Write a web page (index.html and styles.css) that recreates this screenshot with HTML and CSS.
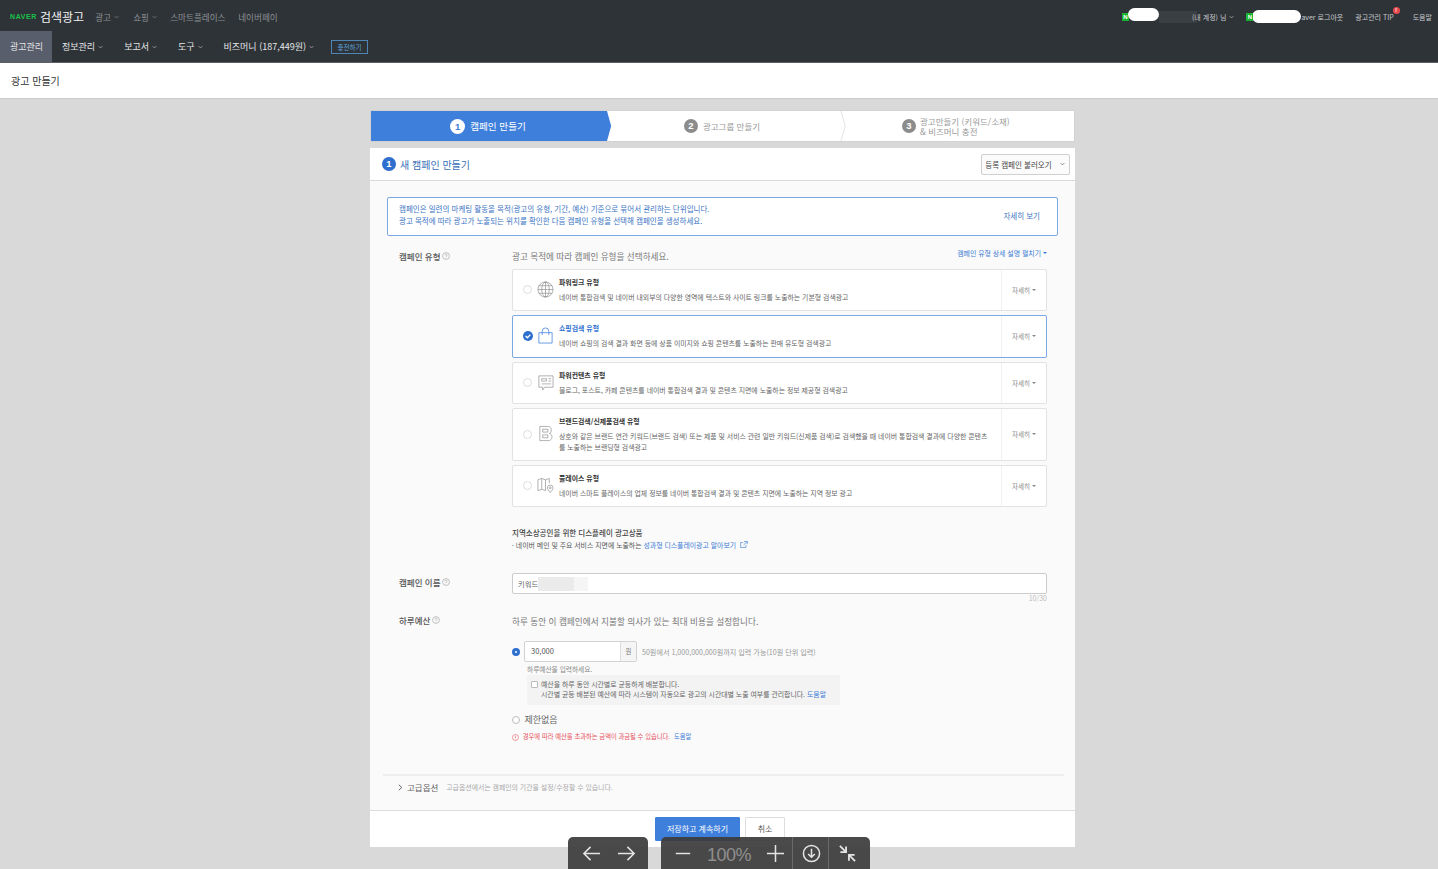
FILE: index.html
```html
<!DOCTYPE html>
<html lang="ko">
<head>
<meta charset="utf-8">
<title>광고 만들기</title>
<link rel="stylesheet" href="styles.css">
</head>
<body>
<header class="header">
  <div class="topbar">
    <div class="brand"><span class="naver">NAVER</span><span class="brand-name">검색광고</span></div>
    <nav class="topnav">
      <a class="tn w1">광고 <svg class="chev" viewBox="0 0 8 5"><path d="M1 1l3 3 3-3"/></svg></a>
      <a class="tn w2">쇼핑 <svg class="chev" viewBox="0 0 8 5"><path d="M1 1l3 3 3-3"/></svg></a>
      <a class="tn w3">스마트플레이스</a>
      <a class="tn">네이버페이</a>
    </nav>
    <div class="account">
      <span class="nbadge">N</span><span class="acct-gap"></span><span class="smudge"></span>
      <span class="utext acct-name">(내 계정) 님 <svg class="chev light" viewBox="0 0 8 5"><path d="M1 1l3 3 3-3"/></svg></span>
      <span class="nbadge second">N</span><span class="acct-gap2"></span>
      <span class="utext">aver 로그아웃</span>
      <span class="utext tip">광고관리 TIP<i class="dot">!</i></span>
      <span class="utext help">도움말</span>
    </div>
  </div>
  <div class="mainbar">
    <a class="mn active">광고관리</a>
    <a class="mn">정보관리 <svg class="chev light" viewBox="0 0 8 5"><path d="M1 1l3 3 3-3"/></svg></a>
    <a class="mn">보고서 <svg class="chev light" viewBox="0 0 8 5"><path d="M1 1l3 3 3-3"/></svg></a>
    <a class="mn">도구 <svg class="chev light" viewBox="0 0 8 5"><path d="M1 1l3 3 3-3"/></svg></a>
    <a class="mn">비즈머니 (187,449원) <svg class="chev light" viewBox="0 0 8 5"><path d="M1 1l3 3 3-3"/></svg></a>
    <a class="charge">충전하기</a>
  </div>
</header>
<div class="pagetitle">광고 만들기</div>

<main class="wrap">
  <div class="steps">
    <div class="step on"><b class="num">1</b><span>캠페인 만들기</span>
      <svg class="arrow" viewBox="0 0 6 30" preserveAspectRatio="none"><path d="M0 0l5 15-5 15z" fill="#3f7fdc"/></svg></div>
    <div class="step s2"><b class="num">2</b><span>광고그룹 만들기</span>
      <svg class="arrow" viewBox="0 0 6 30" preserveAspectRatio="none"><path d="M0 0l5 15-5 15" fill="#fff" stroke="#ccc" stroke-width=".6"/></svg></div>
    <div class="step s3"><b class="num">3</b><span class="two">광고만들기 (키워드/소재)<br>&amp; 비즈머니 충전</span></div>
  </div>

  <section class="card">
    <div class="card-head">
      <div class="card-title"><b class="bignum">1</b>새 캠페인 만들기</div>
      <button class="loadbtn">등록 캠페인 불러오기 <svg class="chev dark" viewBox="0 0 8 5"><path d="M1 1l3 3 3-3"/></svg></button>
    </div>
    <div class="card-body">
      <div class="notice">
        <p>캠페인은 일련의 마케팅 활동을 목적(광고의 유형, 기간, 예산) 기준으로 묶어서 관리하는 단위입니다.<br>광고 목적에 따라 광고가 노출되는 위치를 확인한 다음 캠페인 유형을 선택해 캠페인을 생성하세요.</p>
        <a class="more">자세히 보기</a>
      </div>

      <div class="row r-type">
        <div class="label">캠페인 유형 <svg class="q" viewBox="0 0 10 10"><circle cx="5" cy="5" r="4.3"/><path d="M3.6 4c0-1.8 2.8-1.8 2.8 0 0 1-1.4 1-1.4 2.2M5 7.2v.7"/></svg></div>
        <div class="content">
          <div class="type-head"><span class="lead">광고 목적에 따라 캠페인 유형을 선택하세요.</span><a class="expand">캠페인 유형 상세 설명 펼치기<i class="tri blue"></i></a></div>

          <div class="opt h42">
            <i class="radio"></i>
            <svg class="ico" viewBox="0 0 18 18"><g fill="none" stroke="#8a8a8a" stroke-width=".7"><circle cx="9" cy="9" r="8"/><ellipse cx="9" cy="9" rx="4" ry="8"/><path d="M9 1v16M1 9h16M2 5h14M2 13h14"/></g></svg>
            <div class="opt-text"><h4>파워링크 유형</h4><p>네이버 통합검색 및 네이버 내외부의 다양한 영역에 텍스트와 사이트 링크를 노출하는 기본형 검색광고</p></div>
            <div class="opt-more">자세히<i class="tri"></i></div>
          </div>

          <div class="opt h43 sel">
            <svg class="radio-check" viewBox="0 0 10 10"><circle cx="5" cy="5" r="5" fill="#2e6fce"/><path d="M2.6 5l1.8 1.8 3-3.2" fill="none" stroke="#fff" stroke-width="1.3"/></svg>
            <svg class="ico" viewBox="0 0 18 18"><g fill="none" stroke="#3f7fdc" stroke-width=".8"><path d="M2 6h14v11H2zM5.500 8.500V4.500a3.500 3.500 0 0 1 7 0v4"/></g></svg>
            <div class="opt-text"><h4 class="blue-t">쇼핑검색 유형</h4><p>네이버 쇼핑의 검색 결과 화면 등에 상품 이미지와 쇼핑 콘텐츠를 노출하는 판매 유도형 검색광고</p></div>
            <div class="opt-more">자세히<i class="tri"></i></div>
          </div>

          <div class="opt h42">
            <i class="radio"></i>
            <svg class="ico" viewBox="0 0 18 18"><g fill="none" stroke="#8a8a8a" stroke-width=".7"><path d="M2 2h15v12H8l-2 3v-3H2zM5 5h5v2.500H5zM12 5h3M12 7.500h3M5 10.500h10"/></g></svg>
            <div class="opt-text"><h4>파워컨텐츠 유형</h4><p>블로그, 포스트, 카페 콘텐츠를 네이버 통합검색 결과 및 콘텐츠 지면에 노출하는 정보 제공형 검색광고</p></div>
            <div class="opt-more">자세히<i class="tri"></i></div>
          </div>

          <div class="opt h53">
            <i class="radio"></i>
            <svg class="ico" viewBox="0 0 18 18"><g fill="none" stroke="#8a8a8a" stroke-width=".7"><path d="M3 1.500h9c4 0 4 7 1 7.500 4 .5 4 7.500-1 7.500H3zM6 4.500h5.500v3H6zM6 10.500h5.500v3H6z"/></g></svg>
            <div class="opt-text"><h4>브랜드검색/신제품검색 유형</h4><p>상호와 같은 브랜드 연관 키워드(브랜드 검색) 또는 제품 및 서비스 관련 일반 키워드(신제품 검색)로 검색했을 때 네이버 통합검색 결과에 다양한 콘텐츠<br>를 노출하는 브랜딩형 검색광고</p></div>
            <div class="opt-more">자세히<i class="tri"></i></div>
          </div>

          <div class="opt h42 last">
            <i class="radio"></i>
            <svg class="ico" viewBox="0 0 18 18"><g fill="none" stroke="#8a8a8a" stroke-width=".7"><path d="M1 3l4-1.500 4 1.500 4-1.500v5M1 3v11.500l4-1.500 4 1.500M5 1.500V13M9 3v11.500"/><path d="M14 16.500c-2-2.500-3-3.500-3-5a3 3 0 0 1 6 0c0 1.500-1 2.500-3 5z"/><circle cx="14" cy="11.500" r="1"/></g></svg>
            <div class="opt-text"><h4>플레이스 유형</h4><p>네이버 스마트 플레이스의 업체 정보를 네이버 통합검색 결과 및 콘텐츠 지면에 노출하는 지역 정보 광고</p></div>
            <div class="opt-more">자세히<i class="tri"></i></div>
          </div>

          <div class="local">
            <h5>지역소상공인을 위한 디스플레이 광고상품</h5>
            <p>· 네이버 메인 및 주요 서비스 지면에 노출하는 <a>성과형 디스플레이광고 알아보기</a> <svg class="ext" viewBox="0 0 10 9"><path d="M7.500 5v3.300H.7V2H4M5 .7h4.300V4M9.300 .7L4.500 5"/></svg></p>
          </div>
        </div>
      </div>

      <div class="row r-name">
        <div class="label">캠페인 이름 <svg class="q" viewBox="0 0 10 10"><circle cx="5" cy="5" r="4.3"/><path d="M3.6 4c0-1.8 2.8-1.8 2.8 0 0 1-1.4 1-1.400 2.200M5 7.200v.7"/></svg></div>
        <div class="content">
          <div class="input"><span>키워드</span><i class="mask"></i></div>
          <div class="count">10/30</div>
        </div>
      </div>

      <div class="row r-budget">
        <div class="label">하루예산<svg class="q" viewBox="0 0 10 10"><circle cx="5" cy="5" r="4.3"/><path d="M3.6 4c0-1.8 2.8-1.8 2.8 0 0 1-1.4 1-1.400 2.200M5 7.200v.7"/></svg></div>
        <div class="content">
          <div class="lead budget-lead">하루 동안 이 캠페인에서 지불할 의사가 있는 최대 비용을 설정합니다.</div>
          <div class="budget-line">
            <i class="radio on"></i>
            <div class="money"><span class="val">30,000</span><span class="unit">원</span></div>
            <span class="range">50원에서 1,000,000,000원까지 입력 가능(10원 단위 입력)</span>
          </div>
          <div class="hint">하루예산을 입력하세요.</div>
          <div class="even">
            <i class="check"></i>
            <p>예산을 하루 동안 시간별로 균등하게 배분합니다.<br>시간별 균등 배분된 예산에 따라 시스템이 자동으로 광고의 시간대별 노출 여부를 관리합니다. <a>도움말</a></p>
          </div>
          <div class="nolimit"><i class="radio"></i>제한없음</div>
          <div class="warn"><svg class="warn-i" viewBox="0 0 10 10"><circle cx="5" cy="5" r="4.3"/><path d="M5 2.500v3.200M5 6.800v.8"/></svg> 경우에 따라 예산을 초과하는 금액이 과금될 수 있습니다. <a>도움말</a></div>
        </div>
      </div>

      <div class="advanced">
        <svg class="adv-chev" viewBox="0 0 6 8"><path d="M1 .8L4.500 4 1 7.200"/></svg>
        <strong>고급옵션</strong><span>고급옵션에서는 캠페인의 기간을 설정/수정할 수 있습니다.</span>
      </div>
    </div>
    <div class="card-foot">
      <a class="btn primary">저장하고 계속하기</a>
      <a class="btn">취소</a>
    </div>
  </section>
</main>

<div class="viewer left">
  <svg class="vi" viewBox="0 0 20 20"><path d="M19 10H2M9 3l-7 7 7 7"/></svg>
  <svg class="vi" viewBox="0 0 20 20"><path d="M1 10h17M11 3l7 7-7 7"/></svg>
</div>
<div class="viewer right">
  <svg class="vi minus" viewBox="0 0 20 20"><path d="M2 10h16"/></svg>
  <span class="zoomv">100%</span>
  <svg class="vi plus" viewBox="0 0 20 20"><path d="M1 10h18M10 1v18"/></svg>
  <i class="vsep"></i>
  <svg class="vi down" viewBox="0 0 20 20"><circle cx="10" cy="10" r="8.500"/><path d="M10 5v9M6.500 10.500L10 14l3.500-3.500"/></svg>
  <i class="vsep"></i>
  <svg class="vi shrink" viewBox="0 0 20 20"><path d="M2 2l6 6M2.500 8.500H8.500V2.500M18 18l-6-6M11.500 17.500V11.500H17.500"/></svg>
</div>
</body>
</html>
```
FILE: styles.css
```css
* { box-sizing: border-box; }
html, body { margin: 0; padding: 0; height: 869px; overflow: hidden; }
body { background: #d9d9d9; font-family: "Noto Sans CJK KR", "Noto Sans", sans-serif; color: #444; position: relative; }
p, h4, h5 { margin: 0; font-weight: normal; }
i { font-style: normal; display: block; }

.header { height: 63px; background: #2e3338; border-bottom: 1px solid #5c6066; }
.topbar { height: 31px; display: flex; align-items: center; padding-left: 10px; padding-top: 2px; }
.brand { display: flex; align-items: center; }
.naver { font: 700 7px "Liberation Sans", sans-serif; letter-spacing: .6px; color: #19c24a; margin-right: 3px; }
.brand-name { font-size: 12px; color: #f2f2f2; line-height: 1; }
.topnav { display: flex; align-items: center; margin-left: 11px; }
.tn { font-size: 8.600px; color: #8c9094; display: flex; align-items: center; gap: 3px; white-space: nowrap; }
.w1 { width: 38px; }
.w2 { width: 37px; }
.w3 { width: 68px; }
.chev { width: 5px; height: 4px; fill: none; stroke: #8c9094; stroke-width: 1; }
.chev.light { stroke: #c8cacc; }
.chev.dark { stroke: #555; margin-left: 6px; }
.account { margin-left: auto; display: flex; align-items: center; padding-right: 6px; position: relative; }
.nbadge { width: 7px; height: 8px; background: #19b52f; color: #fff; font: 700 6px/8px "Liberation Sans", sans-serif; text-align: center; position: relative; }
.nbadge.second { margin-left: 12px; }
.acct-gap { width: 31px; height: 13px; background: #fff; border-radius: 7px; margin-left: -1px; position: relative; top: -2px; }
.smudge { width: 38px; height: 12px; background: #3a3f43; }
.acct-gap2 { width: 49px; height: 13px; background: #fff; border-radius: 7px; margin-left: -1px; }
.utext { font-size: 7px; color: #c8cacc; white-space: nowrap; display: flex; align-items: center; gap: 3px; }
.acct-name { margin-left: -5px; }
.tip { margin-left: 12px; position: relative; }
.help { margin-left: 19px; }
.dot { position: absolute; right: -6px; top: -5px; width: 7px; height: 7px; border-radius: 50%; background: #e8494f; color: #fff; font: 700 5px/7px "Liberation Sans", sans-serif; text-align: center; }

.mainbar { height: 31px; display: flex; align-items: center; }
.mn { font-size: 9px; color: #e4e5e6; height: 31px; display: flex; align-items: center; gap: 3px; padding: 0 11px 0 10px; white-space: nowrap; }
.mn.active { background: #585e6c; width: 52px; padding: 0 10px; }
.charge { margin-left: 6px; width: 37px; height: 14px; border: 1px solid #4e85b5; color: #5ea3dc; font-size: 6.500px; display: flex; align-items: center; justify-content: center; white-space: nowrap; }

.pagetitle { height: 36px; background: #fff; border-bottom: 1px solid #ccc; padding-left: 11px; display: flex; align-items: center; font-size: 10px; color: #333; }

.wrap { width: 705px; margin-left: 370px; margin-top: 12px; }
.steps { height: 30px; width: 703px; margin-left: 1px; background: #fff; display: flex; outline: 1px solid #d2d2d2; color: #999; font-size: 8.500px; }
.step { position: relative; display: flex; align-items: center; justify-content: center; gap: 5px; }
.step.on { width: 236px; background: #3f7fdc; color: #fff; font-size: 9.600px; gap: 5px; padding-right: 2px; }
.s2 { width: 234px; padding-right: 4px; }
.s3 { flex: 1; justify-content: flex-start; padding-left: 61px; gap: 4px; }
.arrow { position: absolute; right: -5px; top: 0; width: 5px; height: 30px; overflow: visible; }
.step.on .arrow { right: -5px; }
.num { width: 14px; height: 14px; border-radius: 50%; background: #8c8c8c; color: #fff; font: 700 9.500px/14px "Liberation Sans", sans-serif; text-align: center; flex: none; }
.on .num { width: 15px; height: 15px; line-height: 15px; background: #fff; color: #3f7fdc; }
.two { line-height: 10px; font-size: 8.500px; }

.card { margin-top: 7px; height: 699px; display: flex; flex-direction: column; background: #fff; }
.card-head { height: 33px; flex: none; display: flex; align-items: center; justify-content: space-between; padding: 0 5px 0 12px; border-bottom: 1px solid #d9d9d9; }
.card-title { display: flex; align-items: center; gap: 4px; color: #3a6fb8; font-size: 10px; }
.bignum { width: 14px; height: 14px; border-radius: 50%; background: #2e6fce; color: #fff; font: 700 9.500px/14px "Liberation Sans", sans-serif; text-align: center; }
.loadbtn { width: 89px; height: 21px; padding: 0 1px 0 0; background: #fbfbfb; border: 1px solid #d0d0d0; border-radius: 2px; font: 400 7.500px "Noto Sans CJK KR", sans-serif; color: #444; display: flex; align-items: center; justify-content: center; white-space: pre; }

.card-body { flex: 1; min-height: 0; background: #fafafa; border-bottom: 1px solid #ddd; padding: 16px 17px 0; display: flex; flex-direction: column; }
.notice { width: 671px; height: 39px; flex: none; background: #fff; border: 1px solid #7ba7e4; border-radius: 2px; display: flex; align-items: center; justify-content: space-between; padding: 0 17px 3px 11px; font-size: 7.500px; color: #3a74c4; }
.notice p { line-height: 12.500px; }
.row { display: flex; }
.label { width: 125px; padding-left: 12px; flex: none; font-size: 8.500px; font-weight: 500; color: #555; display: flex; align-items: center; gap: 2px; height: 14px; }
.q { width: 8px; height: 8px; fill: none; stroke: #999; stroke-width: .7; }
.content { width: 535px; flex: none; }
.r-type { margin-top: 13px; }
.type-head { height: 20px; display: flex; justify-content: space-between; align-items: flex-start; }
.lead { font-size: 8.600px; color: #777; line-height: 14px; }
.expand { font-size: 6.900px; color: #3a7bd5; display: flex; align-items: center; gap: 1px; line-height: 10px; margin-top: -1px; }
.tri { width: 0; height: 0; border: 2px solid transparent; border-top: 2.500px solid #888; border-bottom: 0; margin-left: 2px; }
.tri.blue { border-top-color: #3a7bd5; margin-left: 1px; }

.opt { display: flex; align-items: center; background: #fff; border: 1px solid #e2e2e2; border-radius: 2px; margin-bottom: 4px; }
.h42 { height: 42px; }
.h43 { height: 43px; }
.h53 { height: 53px; }
.sel { border-color: #7ba7e4; }
.radio { width: 9px; height: 9px; flex: none; border: 1px solid #ddd; border-radius: 50%; background: #fff; margin: -1px 0 0 10px; }
.radio-check { width: 10px; height: 10px; flex: none; margin: -1px 0 0 9.500px; }
.ico { width: 17px; height: 17px; flex: none; margin: -2px 0 0 5px; }
.sel .ico { margin-left: 4.500px; }
.opt-text { flex: 1; padding-left: 5px; padding-right: 10px; font-size: 6.900px; color: #666; }
.opt-text h4 { font-size: 6.900px; font-weight: 700; color: #333; line-height: 10px; margin-bottom: 5px; margin-top: -1px; }
.opt-text h4.blue-t { color: #2e6fce; }
.opt-text p { line-height: 11px; }
.opt-more { align-self: stretch; width: 45px; flex: none; border-left: 1px solid #f0f0f0; display: flex; align-items: center; justify-content: center; font-size: 6.500px; color: #888; padding-bottom: 1px; }
.last { margin-bottom: 0; }
.local { margin-top: 20px; font-size: 6.900px; color: #555; }
.local h5 { font-size: 7.500px; line-height: 11px; font-weight: 500; color: #444; }
.local p { line-height: 12px; margin-top: 1px; }
.local a { color: #3a7bd5; }
.ext { width: 8px; height: 7px; fill: none; stroke: #3a7bd5; stroke-width: .8; margin-left: 2px; }

.r-name { margin-top: 22px; }
.r-name .label { height: 18px; }
.input { height: 21px; background: #fff; border: 1px solid #ccc; border-radius: 2px; display: flex; align-items: center; padding-left: 5px; font-size: 7.300px; color: #666; }
.mask { width: 50px; height: 14px; background: linear-gradient(90deg, #ebebeb 0 36px, #f5f5f5 36px); }
.count { text-align: right; font-size: 7px; color: #bbb; line-height: 9px; }

.r-budget { margin-top: 11px; }
.r-budget .label { height: 12px; }
.budget-lead { font-size: 8.650px; }
.budget-line { display: flex; align-items: center; margin-top: 13px; height: 21px; }
.radio.on { margin: 0; width: 8px; height: 8px; border: 3px solid #2e6fce; }
.money { margin-left: 4px; width: 113px; height: 21px; display: flex; border: 1px solid #d2d2d2; border-radius: 2px; background: #fff; font-size: 7.500px; color: #555; }
.val { flex: 1; padding-left: 6px; line-height: 18px; }
.unit { width: 16px; background: #f5f5f5; border-left: 1px solid #ddd; font-size: 6.500px; text-align: center; line-height: 19px; color: #777; }
.range { margin-left: 5px; font-size: 7.100px; color: #999; }
.hint { font-size: 6.700px; color: #888; line-height: 10px; margin: 2px 0 0 15px; }
.even { margin: 1px 0 0 15px; width: 313px; height: 30px; background: #f3f3f3; display: flex; align-items: flex-start; padding: 4px 0 0 4px; font-size: 6.900px; color: #666; line-height: 10px; }
.check { width: 7px; height: 7px; border: 1px solid #bbb; background: #fff; border-radius: 1px; flex: none; margin: 2px 3px 0 0; }
.even a, .warn a { color: #3a7bd5; }
.nolimit { display: flex; align-items: center; gap: 4.500px; font-size: 9px; color: #666; margin-top: 7px; height: 15px; }
.nolimit .radio { margin: 0; width: 8px; height: 8px; border-color: #bbb; }
.warn { font-size: 6.300px; color: #e8505b; line-height: 10px; margin-top: 5px; display: flex; align-items: center; gap: 2px; white-space: pre; }
.warn-i { width: 7px; height: 7px; fill: none; stroke: #e8505b; stroke-width: .8; }

.advanced { margin: 32px -5px 0 -4px; width: 681px; height: 36px; flex: none; border-top: 2px solid #eee; display: flex; align-items: center; padding-left: 15px; padding-bottom: 12px; color: #777; font-size: 6.900px; }
.adv-chev { width: 5px; height: 7px; fill: none; stroke: #555; stroke-width: 1.100; margin-right: 4px; }
.advanced strong { font-size: 8.500px; font-weight: 400; color: #666; margin-right: 8px; }
.advanced span { color: #aaa; }

.card-foot { height: 36px; flex: none; background: #fff; display: flex; justify-content: center; gap: 5px; padding-top: 6px; padding-right: 5px; }
.btn { width: 40px; height: 24px; border: 1px solid #ddd; border-radius: 1px; background: #fff; color: #555; font-size: 8px; display: flex; align-items: center; justify-content: center; padding-bottom: 1px; }
.btn.primary { width: 85px; background: #3f7fdc; border-color: #3f7fdc; color: #fff; }

.viewer { position: absolute; top: 837px; height: 32px; background: rgba(60,60,60,.93); border-radius: 5px 5px 0 0; display: flex; align-items: center; }
.viewer.left { left: 568px; width: 80px; padding-left: 14px; gap: 16px; }
.viewer.right { left: 661px; width: 209px; }
.vi { width: 19px; height: 19px; fill: none; stroke: #e4e4e4; stroke-width: 1.600; flex: none; }
.minus { margin-left: 13px; width: 18px; }
.zoomv { width: 59px; margin-left: 15px; padding-top: 4px; font: 400 18px "Liberation Sans", sans-serif; color: #8f8f8f; letter-spacing: -.5px; }
.vsep { width: 1px; height: 32px; background: #6a6a6a; margin-left: 7px; }
.down { margin-left: 9px; }
.shrink { margin-left: 9px; stroke-width: 1.900; }
```
